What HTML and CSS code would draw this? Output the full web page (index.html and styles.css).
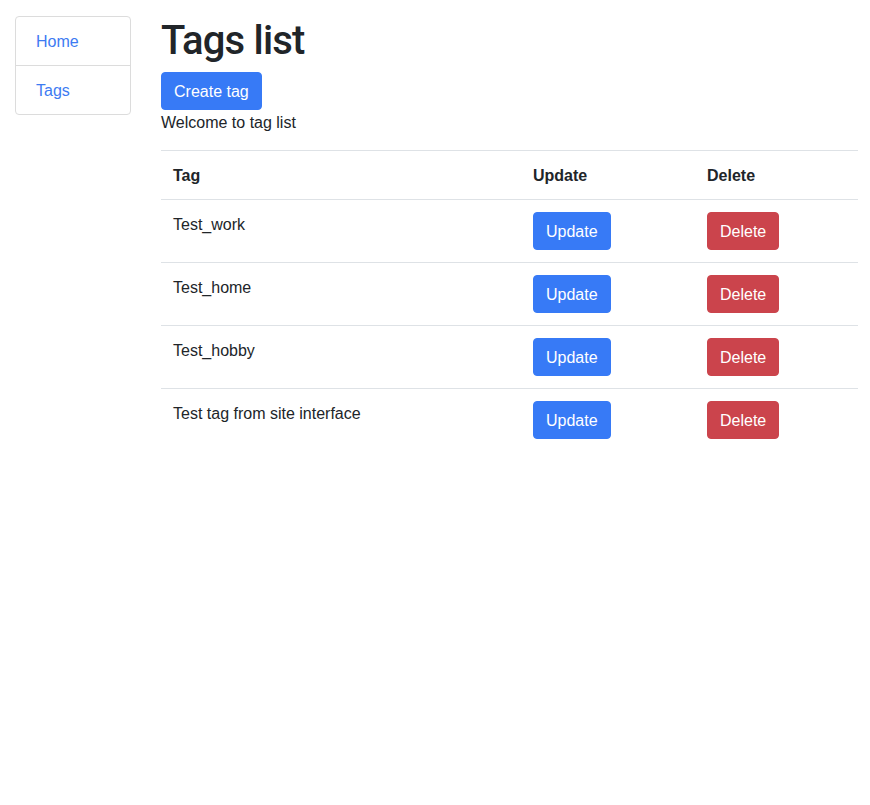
FILE: index.html
```html
<!DOCTYPE html>
<html lang="en">
<head>
<meta charset="utf-8">
<title>Tags list</title>
<link rel="stylesheet" href="styles.css">
</head>
<body>
<div class="layout">
  <nav class="sidebar">
    <a class="side-item" href="#">Home</a>
    <a class="side-item" href="#">Tags</a>
  </nav>
  <main class="main">
    <h1 class="title">Tags list</h1>
    <div><a class="btn btn-primary" href="#">Create tag</a></div>
    <p class="welcome">Welcome to tag list</p>
    <table class="table">
      <colgroup>
        <col class="col-tag">
        <col class="col-update">
        <col class="col-delete">
      </colgroup>
      <thead>
        <tr><th>Tag</th><th>Update</th><th>Delete</th></tr>
      </thead>
      <tbody>
        <tr><td>Test_work</td><td><a class="btn btn-primary" href="#">Update</a></td><td><a class="btn btn-danger" href="#">Delete</a></td></tr>
        <tr><td>Test_home</td><td><a class="btn btn-primary" href="#">Update</a></td><td><a class="btn btn-danger" href="#">Delete</a></td></tr>
        <tr><td>Test_hobby</td><td><a class="btn btn-primary" href="#">Update</a></td><td><a class="btn btn-danger" href="#">Delete</a></td></tr>
        <tr><td>Test tag from site interface</td><td><a class="btn btn-primary" href="#">Update</a></td><td><a class="btn btn-danger" href="#">Delete</a></td></tr>
      </tbody>
    </table>
  </main>
</div>
</body>
</html>
```

FILE: styles.css
```css
html, body {
  margin: 0;
  padding: 0;
  background: #fff;
}
body {
  font-family: "Liberation Sans", Arial, sans-serif;
  font-size: 16px;
  line-height: 1.5;
  color: #212529;
}
.layout {
  display: flex;
  align-items: flex-start;
  gap: 30px;
  padding: 16px 12px 0 15px;
}
.sidebar {
  width: 116px;
  flex: none;
  display: flex;
  flex-direction: column;
  border: 1px solid #dcdcdc;
  border-radius: 4px;
  box-sizing: border-box;
}
.side-item {
  display: block;
  padding: 13px 20px 11px;
  color: #3d7bf2;
  text-decoration: none;
}
.side-item + .side-item {
  border-top: 1px solid #dcdcdc;
}
.main {
  width: 697px;
  flex: none;
}
.title {
  margin: 0 0 8px;
  padding: 1px 0 0;
  height: 47px;
  font-family: Roboto, "Liberation Sans", sans-serif;
  font-weight: 500;
  font-size: 40px;
  line-height: 48px;
  letter-spacing: -0.8px;
  color: #212529;
}
.btn {
  display: inline-block;
  padding: 7px 12px 5px;
  border: 1px solid transparent;
  border-radius: 4px;
  font-size: 16px;
  line-height: 24px;
  color: #fff;
  text-decoration: none;
  vertical-align: top;
}
.btn-primary {
  background: #377af6;
  border-color: #377af6;
}
.btn-danger {
  background: #cb444c;
  border-color: #cb444c;
}
.welcome {
  margin: 0 0 16px;
  padding-top: 1px;
  height: 23px;
}
.table {
  width: 100%;
  border-collapse: collapse;
  table-layout: fixed;
}
.col-tag { width: 360px; }
.col-update { width: 174px; }
.col-delete { width: 163px; }
.table th,
.table td {
  padding: 13px 12px 11px;
  border-top: 1px solid #dee2e6;
  text-align: left;
  vertical-align: top;
}
.table td:nth-child(n+2) {
  padding: 12px;
}
.table th {
  font-weight: 700;
}
```
